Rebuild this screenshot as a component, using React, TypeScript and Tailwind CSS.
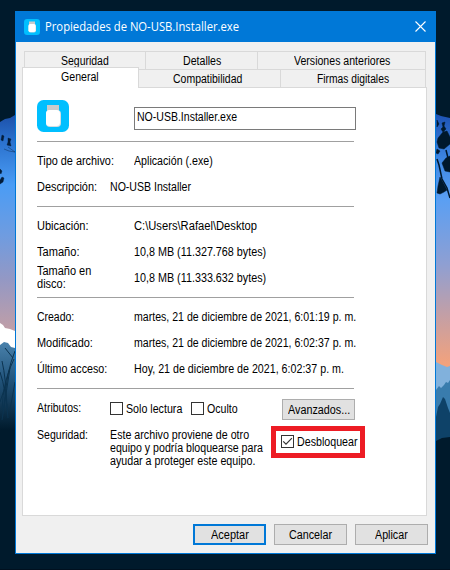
import { useLayoutEffect, useRef, useState } from 'react';
import type { ReactNode } from 'react';

/** Text squeezed horizontally so that it fills exactly `w` pixels. */
function Fit({ w, children, className = '' }: { w: number; children: string; className?: string }) {
  const ref = useRef<HTMLSpanElement>(null);
  const [scale, setScale] = useState(0.89);
  useLayoutEffect(() => {
    if (ref.current) setScale(w / ref.current.offsetWidth);
  }, [w]);
  return (
    <span className={`block shrink-0 whitespace-nowrap ${className}`} style={{ width: w }}>
      <span ref={ref} className="inline-block origin-left" style={{ transform: `scaleX(${scale})` }}>
        {children}
      </span>
    </span>
  );
}

function AppIcon({ size }: { size: number }) {
  return (
    <svg width={size} height={size} viewBox="0 0 32 32" className="shrink-0">
      <rect width="32" height="32" rx="6.5" fill="#00bfff" />
      <rect x="10" y="5" width="12" height="7" fill="#c9cbcc" />
      <rect x="9" y="10" width="15" height="17" rx="4" fill="#d5dde2" />
      <rect x="9" y="10" width="14" height="16" rx="3.5" fill="#fff" />
    </svg>
  );
}

function Tab({ w, box, children }: { w: number; box: string; children: string }) {
  return (
    <div className={`flex h-[18px] shrink-0 justify-center border-t border-r border-[#d9d9d9] leading-[18px] ${box}`}>
      <Fit w={w}>{children}</Fit>
    </div>
  );
}

function Row({ label, lw, value, vw, narrow }: { label: string; lw: number; value: string; vw: number; narrow?: boolean }) {
  return (
    <div className="flex h-[26px] leading-[26px]">
      <div className={`shrink-0 ${narrow ? 'w-[73px]' : 'w-[97px]'}`}>
        <Fit w={lw}>{label}</Fit>
      </div>
      <Fit w={vw}>{value}</Fit>
    </div>
  );
}

function Section({ children }: { children: ReactNode }) {
  return <div className="border-t border-[#a0a0a0] pt-[6px]">{children}</div>;
}

function Check({ checked, className = '' }: { checked?: boolean; className?: string }) {
  return (
    <div className={`flex size-[13px] shrink-0 items-center justify-center border border-[#333] bg-white ${className}`}>
      {checked && (
        <svg width="11" height="11" viewBox="0 0 11 11" fill="none" stroke="#333" strokeWidth="1.2">
          <path d="M1.2 5.300 4 8.100l5.900-5.900" />
        </svg>
      )}
    </div>
  );
}

function Button({ w, primary, children }: { w: number; primary?: boolean; children: string }) {
  return (
    <div
      className={`flex h-[21px] w-[73px] shrink-0 justify-center bg-[#e1e1e1] ${
        primary ? 'border-2 border-[#0078d7] leading-[18px]' : 'border border-[#adadad] leading-[20px]'
      }`}
    >
      <Fit w={w}>{children}</Fit>
    </div>
  );
}

function Wallpaper() {
  return (
    <svg className="absolute inset-0" width="450" height="570" viewBox="0 0 450 570">
      <defs>
        <linearGradient id="skyLeft" gradientUnits="userSpaceOnUse" x1="0" y1="114" x2="0" y2="335">
          <stop offset="0" stopColor="#1c4fa8" />
          <stop offset=".12" stopColor="#2a70cc" />
          <stop offset=".32" stopColor="#4a9cf5" />
          <stop offset=".55" stopColor="#6f9ce0" />
          <stop offset=".75" stopColor="#9498c4" />
          <stop offset="1" stopColor="#c59fa4" />
        </linearGradient>
        <linearGradient id="skyRight" gradientUnits="userSpaceOnUse" x1="0" y1="114" x2="0" y2="365">
          <stop offset="0" stopColor="#1d52b4" />
          <stop offset=".18" stopColor="#3d86e2" />
          <stop offset=".34" stopColor="#5a9ff3" />
          <stop offset=".6" stopColor="#8f9fd2" />
          <stop offset=".8" stopColor="#c39fa6" />
          <stop offset="1" stopColor="#f3a27c" />
        </linearGradient>
        <linearGradient id="grass" x1="0" y1="0" x2="0" y2="1">
          <stop offset="0" stopColor="#4a82ac" />
          <stop offset=".4" stopColor="#24577f" />
          <stop offset="1" stopColor="#001a2c" />
        </linearGradient>
      </defs>
      <rect width="450" height="570" fill="#001a2c" />
      <path d="M0 122l5-3 5-1 5-3v230H0z" fill="url(#skyLeft)" />
      <g fill="#031c3a" stroke="#031c3a" strokeWidth=".4">
        <path d="M2 135l2 1-1 5-2-1zM8 138l3 1-1 3 1 4-4-1 1-3zM2 177l2 1-1 4-3 2v-4zM0 169l2 2-1 3-1-1z" />
        <path d="M4 149l5 2 6 1M8 147l7 5" fill="none" />
      </g>
      <path d="M0 323l3 2 2 3 5 1 5 2v20H0z" fill="#fff" />
      <path d="M0 345l4-3 4 1 3 4 4 1v82H0z" fill="url(#grass)" />
      <path d="M2 410Q3 380 14 359M4 408Q6 372 15 351M7 408Q6 378 2 361M10 410L15 382M2 420L10 368M8 418Q6 390 0 372M5 348l8 10M0 402l5-15" fill="none" stroke="#0b3350" strokeWidth="1" />
      <path d="M436 114l5 2 9 2v250h-14z" fill="url(#skyRight)" />
      <g fill="#00182c" stroke="#00182c">
        <path d="M442 123l3-1-1 4 2 3-3 3-2-3 2-2zM438 138l5-6 4-1 3 6v7l-6 5-5-1-2-6zM442 163l4-5 4-2v16l-5-1zM440 177l5 9 2 4-3 2-4 2-3-1 1-7zM437 120l2 4-2 3zM437 149l3 2-2 3-2-1z" strokeWidth=".5" />
        <path d="M437 159l2 6 3 14 5 9 3 10M446 150l2 8" fill="none" strokeWidth="1.500" />
      </g>
      <path d="M436 362l6 3 5 2 3-1v40h-14z" fill="#81b1dc" />
      <path d="M436 390l3-4 2 2 3-3 2-3 2 1 2-3v50h-14z" fill="#397cad" />
      <path d="M436 417l2-10 2-3 3-7 2 2 3 9 2 5v30h-14z" fill="#0e4268" />
      <path d="M436 441l6-3 8-1v40h-14z" fill="#001a2c" />
      <path d="M0 569.500h450" stroke="#00101f" />
    </svg>
  );
}

export default function App() {
  return (
    <div className="relative h-[570px] w-[450px] overflow-hidden bg-[#001a2c] pt-[11px] pl-[15px] font-['Liberation_Sans',Arial,sans-serif] text-[12px] text-black">
      <Wallpaper />
      <div className="relative flex h-[543px] w-[421px] flex-col border border-[#0078d7] bg-[#f0f0f0]">
        <div className="flex h-[30px] shrink-0 items-center bg-[#0078d7] pl-2 text-white">
          <AppIcon size={16} />
          <Fit w={194} className="ml-[5px] font-['Open_Sans','Noto_Sans',sans-serif] leading-[30px]">
            Propiedades de NO-USB.Installer.exe
          </Fit>
          <svg width="11" height="11" viewBox="0 0 11 11" className="ml-auto mr-[9px] mb-[2px]" stroke="#fff" strokeWidth="1.1">
            <path d="M.5.5l10 10M10.500.5l-10 10" />
          </svg>
        </div>

        <div className="mt-[9px] ml-2 flex w-[402px]">
          <Tab w={48} box="w-[122px] border-l">Seguridad</Tab>
          <Tab w={38} box="w-[112px]">Detalles</Tab>
          <Tab w={96} box="w-[168px]">Versiones anteriores</Tab>
        </div>
        <div className="ml-[6px] flex h-[18px] w-[404px]">
          <div className="z-10 -mt-[2px] flex h-[21px] w-[117px] shrink-0 justify-center border border-b-0 border-[#d9d9d9] bg-white pr-px leading-[18px]">
            <Fit w={38}>General</Fit>
          </div>
          <Tab w={69} box="w-[142px] pr-[4px]">Compatibilidad</Tab>
          <Tab w={72} box="w-[145px]">Firmas digitales</Tab>
        </div>

        <div className="ml-[6px] h-[429px] w-[405px] shrink-0 border border-[#d9d9d9] bg-white pl-[14px]">
          <div className="flex h-[53px] pt-[12px]">
            <AppIcon size={32} />
            <div className="mt-[7px] ml-[65px] h-[23px] w-[222px] border border-[#7a7a7a] pl-[2px] leading-[18px]">
              <Fit w={100}>NO-USB.Installer.exe</Fit>
            </div>
          </div>
          <div className="w-[317px]">
            <div className="h-[65px]">
              <Section>
                <Row label="Tipo de archivo:" lw={77} value="Aplicación (.exe)" vw={79} />
                <Row label="Descripción:" lw={60} value="NO-USB Installer" vw={81} narrow />
              </Section>
            </div>
            <div className="h-[91px]">
              <Section>
                <Row label="Ubicación:" lw={51.5} value="C:\Users\Rafael\Desktop" vw={123} />
                <Row label="Tamaño:" lw={42.5} value="10,8 MB (11.327.768 bytes)" vw={132} />
                <div className="flex h-[26px]">
                  <div className="w-[97px] leading-[13px]">
                    <Fit w={54}>Tamaño en</Fit>
                    <Fit w={28.5}>disco:</Fit>
                  </div>
                  <Fit w={132} className="leading-[26px]">10,8 MB (11.333.632 bytes)</Fit>
                </div>
              </Section>
            </div>
            <div className="h-[91px]">
              <Section>
                <Row label="Creado:" lw={37.5} value="martes, 21 de diciembre de 2021, 6:01:19 p. m." vw={222} />
                <Row label="Modificado:" lw={55.5} value="martes, 21 de diciembre de 2021, 6:02:37 p. m." vw={222} />
                <Row label="Último acceso:" lw={70.5} value="Hoy, 21 de diciembre de 2021, 6:02:37 p. m." vw={210} />
              </Section>
            </div>
            <div className="h-px bg-[#a0a0a0]" />
          </div>
          <div className="flex h-[31px] w-[318px] leading-[26px]">
            <div className="mt-[6px] w-[73px]">
              <Fit w={44.5}>Atributos:</Fit>
            </div>
            <Check className="mt-[13px]" />
            <Fit w={56} className="mt-[7px] ml-[3px]">Solo lectura</Fit>
            <Check className="mt-[13px] ml-[9px]" />
            <Fit w={31} className="mt-[7px] ml-[3px]">Oculto</Fit>
            <div className="mt-[10px] ml-auto">
              <Button w={62}>Avanzados...</Button>
            </div>
          </div>
          <div className="flex w-[328px]">
            <div className="mt-[9px] w-[73px] leading-[13px]">
              <Fit w={51}>Seguridad:</Fit>
            </div>
            <div className="mt-[9px] w-[161px] leading-[13px]">
              <Fit w={139}>Este archivo proviene de otro</Fit>
              <Fit w={153}>equipo y podría bloquearse para</Fit>
              <Fit w={145}>ayudar a proteger este equipo.</Fit>
            </div>
            <div className="mt-[6px] flex h-[32px] w-[94px] border-[5px] border-[#ed1c24] pl-[5px] leading-[22px]">
              <Check checked className="mt-[4px]" />
              <Fit w={60.5} className="ml-[3px]">Desbloquear</Fit>
            </div>
          </div>
        </div>

        <div className="mt-[8px] mr-[7px] flex justify-end gap-[8px]">
          <Button w={37.5} primary>Aceptar</Button>
          <Button w={43}>Cancelar</Button>
          <Button w={33}>Aplicar</Button>
        </div>
      </div>
    </div>
  );
}
